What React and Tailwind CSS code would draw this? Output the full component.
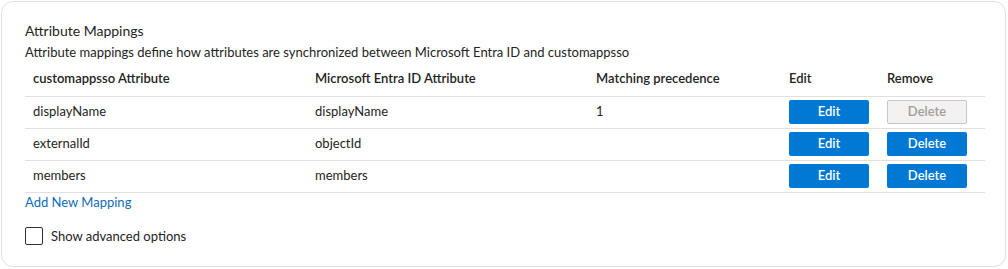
const ROWS = [
  { source: 'displayName', target: 'displayName', precedence: '1', canDelete: false },
  { source: 'externalId', target: 'objectId', precedence: '', canDelete: true },
  { source: 'members', target: 'members', precedence: '', canDelete: true },
]

export default function App() {
  return (
    <div className="h-[269px] w-[1008px] bg-white p-px" style={{ fontFamily: 'Lato, "Noto Sans", sans-serif' }}>
      <div className="h-[266px] w-[1005px] rounded-[12px] border border-[#e0e0e0] bg-white px-[23px] pt-[19px] text-[#242424]">
        <h2 className="text-[14px] leading-[20px]">Attribute Mappings</h2>
        <p className="mt-[2px] text-[13px] leading-[18px]">
          Attribute mappings define how attributes are synchronized between Microsoft Entra ID and customappsso
        </p>

        <table className="w-[960px] table-fixed border-collapse text-[13px]">
          <colgroup>
            <col className="w-[282px]" />
            <col className="w-[281px]" />
            <col className="w-[193px]" />
            <col className="w-[98px]" />
            <col className="w-[106px]" />
          </colgroup>
          <thead>
            <tr className="h-[35px] border-b border-[#e0e0e0] text-left">
              <th className="px-2 font-semibold">customappsso Attribute</th>
              <th className="px-2 font-semibold">Microsoft Entra ID Attribute</th>
              <th className="px-2 font-semibold">Matching precedence</th>
              <th className="px-2 font-semibold">Edit</th>
              <th className="px-2 font-semibold">Remove</th>
            </tr>
          </thead>
          <tbody>
            {ROWS.map((r) => (
              <tr key={r.source} className="h-[32px] border-b border-[#e0e0e0]">
                <td className="px-2">{r.source}</td>
                <td className="px-2">{r.target}</td>
                <td className="px-2">{r.precedence}</td>
                <td className="px-2">
                  <button className="h-[24px] w-[80px] rounded-[2px] bg-[#0078d4] text-[13px] font-semibold text-white">
                    Edit
                  </button>
                </td>
                <td className="px-2">
                  {r.canDelete ? (
                    <button className="h-[24px] w-[80px] rounded-[2px] bg-[#0078d4] text-[13px] font-semibold text-white">
                      Delete
                    </button>
                  ) : (
                    <button disabled className="h-[24px] w-[80px] rounded-[2px] border border-[#c8c6c4] bg-[#f3f2f1] text-[13px] font-semibold text-[#a19f9d]">
                      Delete
                    </button>
                  )}
                </td>
              </tr>
            ))}
          </tbody>
        </table>

        <a href="#" className="block text-[13px] leading-[18px] text-[#0f6cbd]">Add New Mapping</a>

        <label className="mt-[16px] flex items-center gap-[8px] text-[13px]">
          <span className="h-[18px] w-[18px] rounded-[2px] border border-[#323130]" />
          Show advanced options
        </label>
      </div>
    </div>
  )
}
